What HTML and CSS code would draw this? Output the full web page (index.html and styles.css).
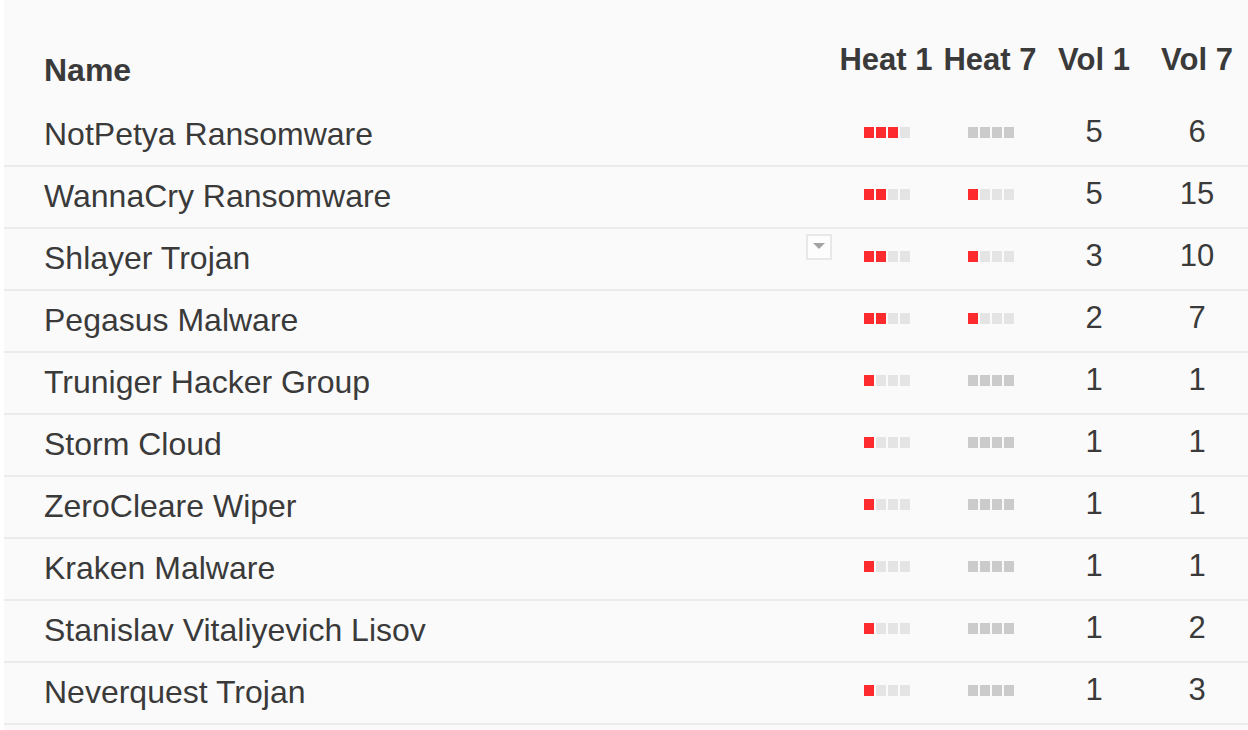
FILE: index.html
```html
<!DOCTYPE html>
<html>
<head>
<meta charset="utf-8">
<link rel="stylesheet" href="styles.css">
</head>
<body>
<div class="panel">
  <div class="row head">
    <div class="hname">Name</div>
    <div class="hcol">Heat 1</div>
    <div class="hcol">Heat 7</div>
    <div class="hcol">Vol 1</div>
    <div class="hcol">Vol 7</div>
  </div>

  <div class="row">
    <div class="name">NotPetya Ransomware</div>
    <div class="heat"><span class="sq on"></span><span class="sq on"></span><span class="sq on"></span><span class="sq"></span></div>
    <div class="heat zero"><span class="sq"></span><span class="sq"></span><span class="sq"></span><span class="sq"></span></div>
    <div class="num">5</div>
    <div class="num">6</div>
  </div>

  <div class="row">
    <div class="name">WannaCry Ransomware</div>
    <div class="heat"><span class="sq on"></span><span class="sq on"></span><span class="sq"></span><span class="sq"></span></div>
    <div class="heat"><span class="sq on"></span><span class="sq"></span><span class="sq"></span><span class="sq"></span></div>
    <div class="num">5</div>
    <div class="num">15</div>
  </div>

  <div class="row">
    <div class="name">Shlayer Trojan</div>
    <div class="heat"><span class="sq on"></span><span class="sq on"></span><span class="sq"></span><span class="sq"></span></div>
    <div class="heat"><span class="sq on"></span><span class="sq"></span><span class="sq"></span><span class="sq"></span></div>
    <div class="num">3</div>
    <div class="num">10</div>
    <div class="menu-btn"><span class="tri"></span></div>
  </div>

  <div class="row">
    <div class="name">Pegasus Malware</div>
    <div class="heat"><span class="sq on"></span><span class="sq on"></span><span class="sq"></span><span class="sq"></span></div>
    <div class="heat"><span class="sq on"></span><span class="sq"></span><span class="sq"></span><span class="sq"></span></div>
    <div class="num">2</div>
    <div class="num">7</div>
  </div>

  <div class="row">
    <div class="name">Truniger Hacker Group</div>
    <div class="heat"><span class="sq on"></span><span class="sq"></span><span class="sq"></span><span class="sq"></span></div>
    <div class="heat zero"><span class="sq"></span><span class="sq"></span><span class="sq"></span><span class="sq"></span></div>
    <div class="num">1</div>
    <div class="num">1</div>
  </div>

  <div class="row">
    <div class="name">Storm Cloud</div>
    <div class="heat"><span class="sq on"></span><span class="sq"></span><span class="sq"></span><span class="sq"></span></div>
    <div class="heat zero"><span class="sq"></span><span class="sq"></span><span class="sq"></span><span class="sq"></span></div>
    <div class="num">1</div>
    <div class="num">1</div>
  </div>

  <div class="row">
    <div class="name">ZeroCleare Wiper</div>
    <div class="heat"><span class="sq on"></span><span class="sq"></span><span class="sq"></span><span class="sq"></span></div>
    <div class="heat zero"><span class="sq"></span><span class="sq"></span><span class="sq"></span><span class="sq"></span></div>
    <div class="num">1</div>
    <div class="num">1</div>
  </div>

  <div class="row">
    <div class="name">Kraken Malware</div>
    <div class="heat"><span class="sq on"></span><span class="sq"></span><span class="sq"></span><span class="sq"></span></div>
    <div class="heat zero"><span class="sq"></span><span class="sq"></span><span class="sq"></span><span class="sq"></span></div>
    <div class="num">1</div>
    <div class="num">1</div>
  </div>

  <div class="row">
    <div class="name">Stanislav Vitaliyevich Lisov</div>
    <div class="heat"><span class="sq on"></span><span class="sq"></span><span class="sq"></span><span class="sq"></span></div>
    <div class="heat zero"><span class="sq"></span><span class="sq"></span><span class="sq"></span><span class="sq"></span></div>
    <div class="num">1</div>
    <div class="num">2</div>
  </div>

  <div class="row">
    <div class="name">Neverquest Trojan</div>
    <div class="heat"><span class="sq on"></span><span class="sq"></span><span class="sq"></span><span class="sq"></span></div>
    <div class="heat zero"><span class="sq"></span><span class="sq"></span><span class="sq"></span><span class="sq"></span></div>
    <div class="num">1</div>
    <div class="num">3</div>
  </div>
</div>
</body>
</html>
```

FILE: styles.css
```css
html, body {
  margin: 0;
  padding: 0;
  background: #ffffff;
}

body {
  font-family: "Liberation Sans", Arial, Helvetica, sans-serif;
  color: #3a3a3a;
}

.panel {
  margin-left: 4px;
  background: #fafafa;
  min-height: 730px;
}

.row {
  position: relative;
  display: grid;
  grid-template-columns: 1fr 104px 104px 104px 102px;
  height: 60px;
  border-bottom: 2px solid #ececec;
  font-size: 31px;
}

.row.head {
  height: 105px;
  border-bottom: none;
  font-weight: bold;
}

.hname {
  padding: 53px 0 0 40px;
  line-height: 35px;
  font-size: 32px;
}

.hcol {
  padding-top: 42px;
  line-height: 35px;
  text-align: center;
  white-space: nowrap;
}

.name {
  padding-left: 40px;
  font-size: 32px;
  line-height: 58px;
  white-space: nowrap;
}

.num {
  line-height: 54px;
  text-align: center;
}

.heat {
  display: flex;
  align-items: center;
  justify-content: center;
  gap: 2px;
  padding-bottom: 6px;
  padding-left: 2px;
}

.sq {
  width: 10px;
  height: 11px;
  background: #e4e4e4;
}

.sq.on {
  background: #fd2a2e;
}

.heat.zero .sq {
  background: #cbcbcb;
}

.menu-btn {
  position: absolute;
  left: 802px;
  top: 5px;
  width: 22px;
  height: 22px;
  border: 2px solid #e8e8e8;
  background: #fdfdfd;
  display: flex;
  align-items: center;
  justify-content: center;
}

.tri {
  width: 0;
  height: 0;
  border-left: 6px solid transparent;
  border-right: 6px solid transparent;
  border-top: 6px solid #a3a3a3;
  margin-top: -3px;
}
```
